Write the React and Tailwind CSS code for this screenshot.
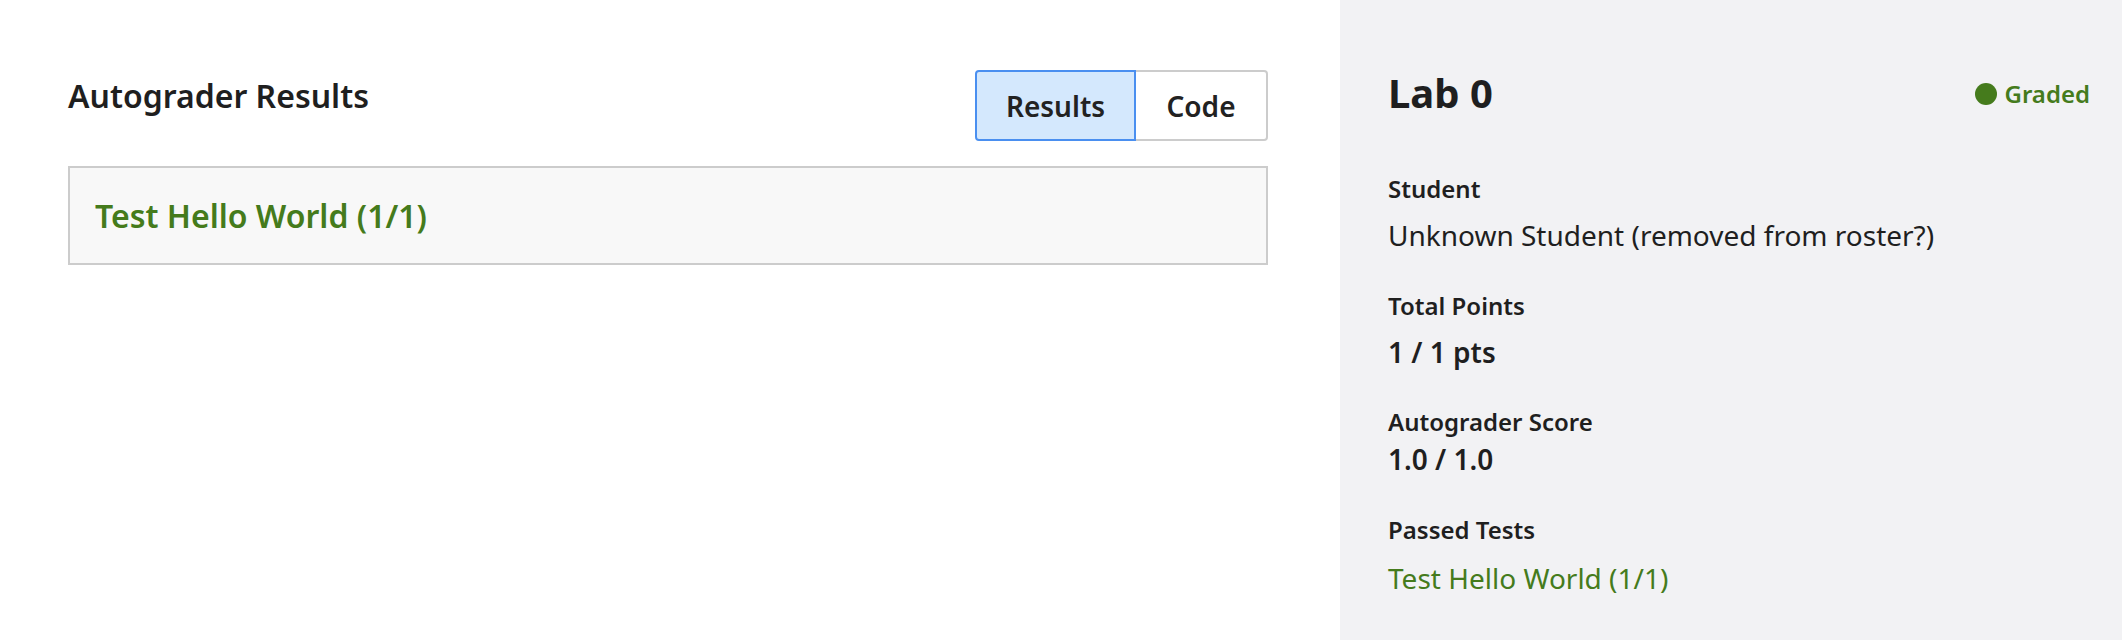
export default function App() {
  const font = { fontFamily: '"Noto Sans", "Open Sans", sans-serif' };
  return (
    <div className="flex w-[2122px] h-[640px] bg-white text-[#1f1f1f]" style={font}>
      <div className="flex-1 pl-[68px] pr-[72px] pt-[70px]">
        <div className="flex justify-between items-start">
          <h2 className="mt-[6px] text-[32px] leading-[40px] font-semibold">Autograder Results</h2>
          <div className="flex">
            <button className="h-[71px] w-[161px] rounded-l-[4px] border-2 border-[#4a8ff0] bg-[#d4e8fd] text-[28px] font-semibold text-[#222]">
              Results
            </button>
            <button className="h-[71px] w-[132px] rounded-r-[4px] border-2 border-l-0 border-[#cccccc] bg-white text-[28px] font-semibold text-[#222]">
              Code
            </button>
          </div>
        </div>
        <div className="mt-[25px] h-[99px] border-2 border-[#cccccc] bg-[#f8f8f8] flex items-center pl-[25px]">
          <span className="text-[32px] leading-[40px] font-semibold text-[#457b1c]">Test Hello World (1/1)</span>
        </div>
      </div>
      <div className="w-[782px] bg-[#f2f2f4] pl-[48px] pr-[32px] pt-[69px]">
        <div className="flex justify-between items-center h-[48px]">
          <h1 className="text-[40px] leading-[48px] font-bold">Lab 0</h1>
          <div className="flex items-center gap-[8px] text-[24px] font-semibold text-[#457b1c] mt-[2px]">
            <span className="w-[22px] h-[22px] rounded-full bg-[#457b1c]"></span>
            <span>Graded</span>
          </div>
        </div>
        <div className="mt-[56px] text-[24px] leading-[32px] font-semibold">Student</div>
        <div className="mt-[10px] text-[28px] leading-[40px]">Unknown Student (removed from roster?)</div>
        <div className="mt-[35px] text-[24px] leading-[32px] font-semibold">Total Points</div>
        <div className="mt-[10px] text-[28px] leading-[40px] font-semibold">1 / 1 pts</div>
        <div className="mt-[34px] text-[24px] leading-[32px] font-semibold">Autograder Score</div>
        <div className="mt-[1px] text-[28px] leading-[40px] font-semibold">1.0 / 1.0</div>
        <div className="mt-[35px] text-[24px] leading-[32px] font-semibold">Passed Tests</div>
        <div className="mt-[12px] text-[28px] leading-[40px] text-[#457b1c]">Test Hello World (1/1)</div>
      </div>
    </div>
  );
}
